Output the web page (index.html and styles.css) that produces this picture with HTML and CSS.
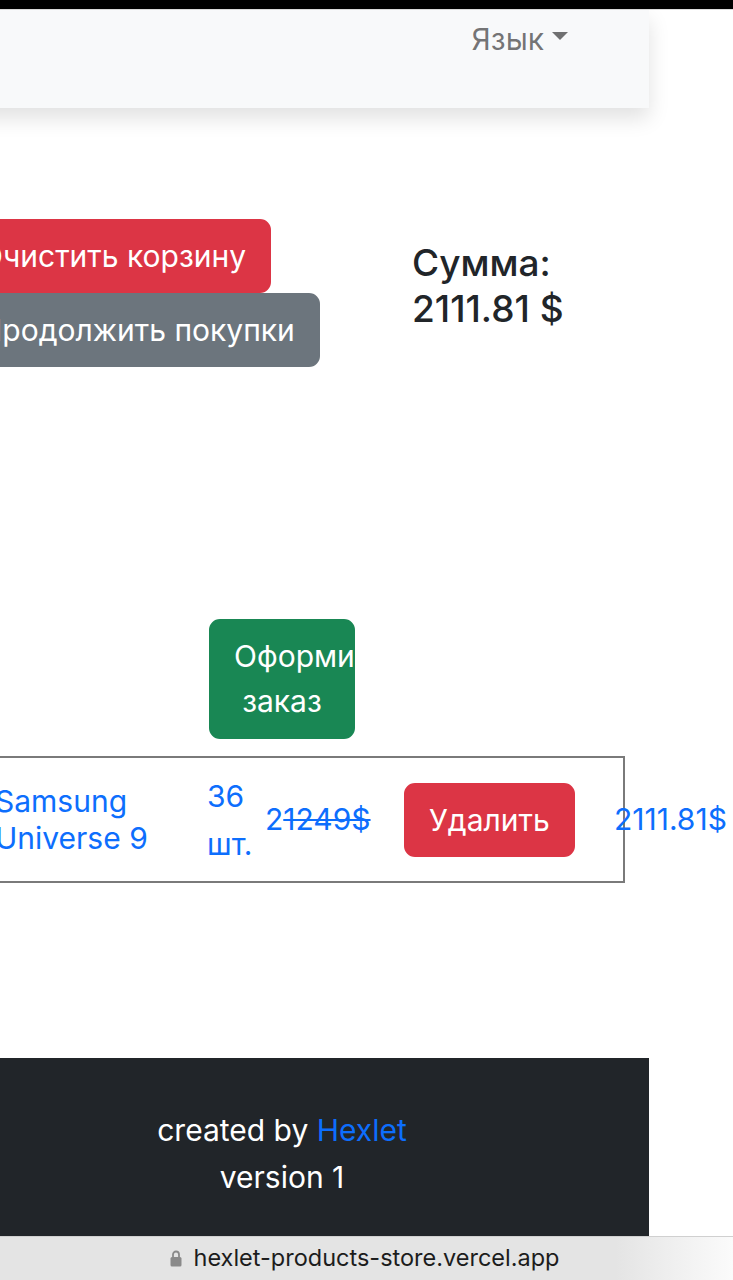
FILE: index.html
```html
<!DOCTYPE html>
<html lang="ru">
<head>
<meta charset="utf-8">
<title>Корзина</title>
<link rel="stylesheet" href="styles.css">
</head>
<body>
<div class="status-bar"></div>
<div class="page">
  <nav class="navbar">
    <a class="lang-toggle" href="#">Язык<span class="caret"></span></a>
  </nav>

  <main class="cart">
    <section class="cart-top">
      <div class="cart-actions">
        <button class="btn btn-danger">Очистить корзину</button>
        <button class="btn btn-secondary">Продолжить покупки</button>
      </div>
      <h5 class="cart-sum">Сумма:<br>2111.81 $</h5>
    </section>

    <div class="checkout-wrap">
      <button class="btn btn-success checkout">Оформить заказ</button>
    </div>

    <div class="cart-row">
      <a class="cell cell-name" href="#">Samsung Universe 9</a>
      <a class="cell cell-qty" href="#">36 шт.</a>
      <a class="cell cell-price" href="#">2<s>1249$</s></a>
      <div class="cell cell-btn"><button class="btn btn-danger">Удалить</button></div>
      <a class="cell cell-total" href="#">2111.81$</a>
    </div>
  </main>

  <footer class="footer">
    <div>created by <a href="#">Hexlet</a></div>
    <div>version 1</div>
  </footer>
</div>
<div class="url-bar">
  <svg class="lock" width="12" height="17" viewBox="0 0 12 17"><path d="M3 7V4.5a3 3 0 0 1 6 0V7" fill="none" stroke="#8a8a8a" stroke-width="1.8"/><rect x="0.5" y="7" width="11" height="9.5" rx="1.5" fill="#8a8a8a"/></svg>
  <span>hexlet-products-store.vercel.app</span>
</div>
</body>
</html>
```
FILE: styles.css
```css
* { box-sizing: border-box; }
html, body { margin: 0; padding: 0; }
body {
  width: 733px;
  height: 1280px;
  overflow: hidden;
  background: #fff;
  font-family: Inter, "Noto Sans", "Liberation Sans", sans-serif;
  font-size: 30px;
  line-height: 46.5px;
  color: #212529;
}
a { color: #0d6efd; text-decoration: none; }

.status-bar { height: 10px; background: #000; border-bottom: 1px solid #ddd; }

.page {
  width: 734px;
  margin-left: -85px;
}

.navbar {
  height: 98px;
  background: #f8f9fa;
  box-shadow: 0 10px 20px rgba(0,0,0,0.12);
  display: flex;
  justify-content: flex-end;
  align-items: flex-start;
  padding: 6px 81px 0 0;
  position: relative;
}
.lang-toggle {
  color: rgba(0,0,0,0.55);
  display: flex;
  align-items: center;
}
.caret {
  display: inline-block;
  margin-left: 8px;
  margin-top: -6px;
  border-top: 8px solid rgba(0,0,0,0.55);
  border-left: 8px solid transparent;
  border-right: 8px solid transparent;
}

.cart { padding-top: 111px; }

.cart-top {
  display: grid;
  grid-template-columns: 457px 1fr;
  padding-left: 40px;
}
.cart-actions {
  display: flex;
  flex-direction: column;
  align-items: flex-start;
}
.btn {
  font: inherit;
  line-height: 46px;
  border: 2px solid transparent;
  border-radius: 11px;
  padding: 12px 23px;
  color: #fff;
  cursor: pointer;
  white-space: nowrap;
}
.btn-danger { background: #dc3545; border-color: #dc3545; }
.btn-secondary { background: #6c757d; border-color: #6c757d; }
.btn-success { background: #198754; border-color: #198754; }

.cart-sum {
  margin: 21px 0 0;
  font-size: 37px;
  font-weight: 500;
  line-height: 46px;
}

.checkout-wrap {
  margin-top: 252px;
  padding-left: 294px;
}
.checkout {
  width: 146px;
  white-space: normal;
  overflow: hidden;
  text-align: center;
  line-height: 45px;
  padding: 13px 23px;
}

.cart-row {
  margin: 17px 0 0 20px;
  width: 690px;
  height: 127px;
  border: 2px solid #7a7a7a;
  display: grid;
  grid-template-columns: 212px 58px 139px 210px 8px;
  align-items: center;
  padding-left: 58px;
}
.cell-name { line-height: 37px; }
.cell-qty { line-height: 48px; }
.cell-price s { text-decoration-thickness: 2px; }
.cell-btn .btn { padding: 12px 23px; }
.cell-total { white-space: nowrap; }

.footer {
  margin-top: 175px;
  height: 178px;
  background: #212529;
  color: #fff;
  text-align: center;
  padding-top: 49px;
  line-height: 47px;
}

.url-bar {
  height: 44px;
  border-top: 1px solid #d0d0d0;
  background: linear-gradient(to right, #e4e4e4 0%, #e4e4e4 84%, #fbfbfb 100%);
  display: flex;
  align-items: center;
  justify-content: center;
  gap: 12px;
  font-family: Inter, "Noto Sans", sans-serif;
  font-size: 23.5px;
  color: #1c1c1c;
  padding-right: 4px;
}
```
